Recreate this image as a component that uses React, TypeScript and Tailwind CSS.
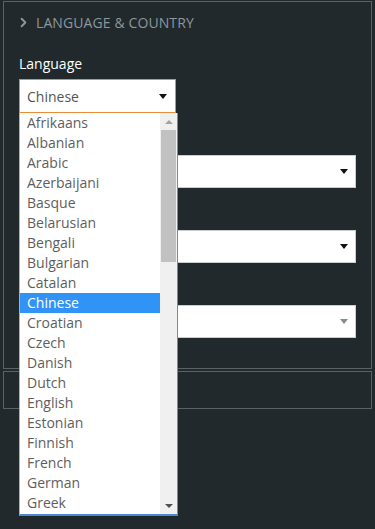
import { ChevronRight } from "lucide-react"

const languages = [
    'Afrikaans', 'Albanian', 'Arabic', 'Azerbaijani', 'Basque', 'Belarusian', 'Bengali',
    'Bulgarian', 'Catalan', 'Chinese', 'Croatian', 'Czech', 'Danish', 'Dutch', 'English',
    'Estonian', 'Finnish', 'French', 'German', 'Greek',
]

const Caret = ({ muted }: { muted?: boolean }) => (
    <span className={`w-0 h-0 border-l-[4px] border-r-[4px] border-t-[5px] border-l-transparent border-r-transparent ${muted ? 'border-t-[#8a8a8a]' : 'border-t-[#111]'}`} />
)

// label sits under the open list, so only its space is kept
const Field = ({ muted }: { muted?: boolean }) => (
    <div className="mt-[17px]">
        <div className="h-[20px]" />
        <div className="mt-[5px] h-[33px] bg-white border border-[#c9cdd0] flex items-center justify-end pr-[7px]">
            <Caret muted={muted} />
        </div>
    </div>
)

const App = () => {
    return (
        <div className="w-[375px] h-[529px] bg-[#22292c] pt-[1px] px-[3px] overflow-hidden" style={{ fontFamily: '"Open Sans", sans-serif' }}>
            <div className="relative h-[368px] border border-[#5b6266]">
                <div className="h-[40px] flex items-center pl-[12px] gap-[5px] text-[#8c979c]">
                    <ChevronRight size={15} strokeWidth={3} />
                    <span className="text-[14px] tracking-[0.1px] uppercase">Language &amp; Country</span>
                </div>

                <div className="px-[15px]">
                    <div className="mt-[12px]">
                        <div className="h-[20px] leading-[20px] text-[14px] text-white">Language</div>
                        <div className="mt-[5px] w-[157px] h-[34px] bg-white border border-[#e98b39] flex items-center justify-between pl-[7px] pr-[8px]">
                            <span className="text-[14px] text-[#555]">Chinese</span>
                            <Caret />
                        </div>
                    </div>
                    <Field />
                    <Field />
                    <Field muted />
                </div>

                {/* open native list */}
                <div className="absolute left-[15px] top-[111px] w-[159px] h-[403px] z-10 bg-white border-l border-[#9fb4cc] border-r-[1px] border-r-[#5f8fcf] border-b-[2px] border-b-[#4f86cf] flex">
                    <ul className="flex-1">
                        {languages.map(l => (
                            <li key={l} className={`h-[20px] leading-[20px] pl-[7px] text-[14px] ${l === 'Chinese' ? 'bg-[#3193f5] text-white' : 'text-[#5e5e5e]'}`}>
                                {l}
                            </li>
                        ))}
                    </ul>
                    <div className="w-[17px] bg-[#f0f0f0] flex flex-col">
                        <div className="h-[17px] flex items-center justify-center">
                            <span className="w-0 h-0 border-l-[4px] border-r-[4px] border-b-[4px] border-l-transparent border-r-transparent border-b-[#a3a3a3]" />
                        </div>
                        <div className="mx-[1px] h-[132px] bg-[#c1c1c1]" />
                        <div className="flex-1" />
                        <div className="h-[17px] flex items-center justify-center">
                            <span className="w-0 h-0 border-l-[4px] border-r-[4px] border-t-[4px] border-l-transparent border-r-transparent border-t-[#505050]" />
                        </div>
                    </div>
                </div>
            </div>

            <div className="mt-[2px] h-[38px] border border-[#5b6266] flex items-center pl-[12px] text-[#6f9bd0]">
                <ChevronRight size={15} strokeWidth={3} />
            </div>
        </div>
    )
}
export default App
